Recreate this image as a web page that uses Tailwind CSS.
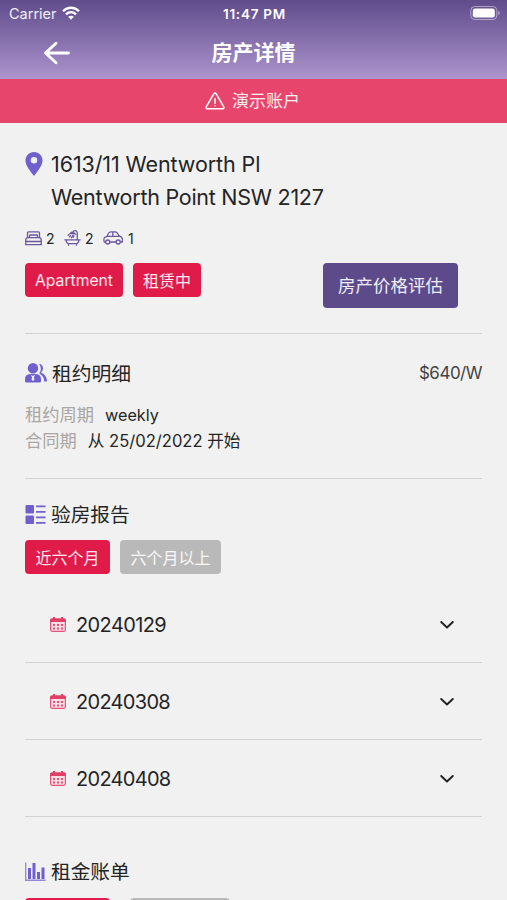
<!DOCTYPE html>
<html lang="zh-CN">
<head>
<meta charset="utf-8">
<meta name="viewport" content="width=device-width, initial-scale=1">
<title>房产详情</title>
<script src="https://cdn.jsdelivr.net/npm/@tailwindcss/browser@4"></script>
</head>
<body class="h-[900px] w-[507px] overflow-hidden bg-[#f1f1f1] font-['Inter','Noto_Sans_CJK_SC',sans-serif] text-[#242424]">
<header class="h-[79px] bg-linear-to-b from-[#614c8c] to-[#ad95cd] text-white">
  <div class="grid h-[27px] grid-cols-3 items-center pr-[7px] pl-[9px] text-[14px] whitespace-nowrap">
    <div class="flex items-center gap-[6px] text-white/90"><span class="text-[14.5px]">Carrier</span>
      <svg class="-mt-[1px] -ml-[1px] h-[14px] w-[18px]" viewBox="0 0 18 14" fill="none" stroke="#fff" stroke-width="2.3"><path d="M1 5.2C5.5.6 12.500.6 17 5.200M4 8.400C7 5.500 11 5.500 14 8.400"/><path d="M6.200 10.800Q9 8.500 11.800 10.800L9 13.800Z" fill="#fff" stroke="none"/></svg>
    </div>
    <div class="pt-[1px] text-center text-[13.500px] font-semibold tracking-[0.75px]">11:47 PM</div>
    <svg class="-mt-[1px] h-[14px] w-[30px] justify-self-end" viewBox="0 0 30 14"><rect x=".8" y=".5" width="26" height="13" rx="4" fill="none" stroke="#fff" stroke-opacity=".45"/><rect x="2.800" y="2.500" width="22" height="9" rx="2.300" fill="#fff"/><path d="M28.300 5v4q1.500-.7 1.500-2t-1.500-2" fill="#fff" fill-opacity=".5"/></svg>
  </div>
  <div class="grid h-[52px] grid-cols-3 items-center">
    <svg class="-mt-[1px] ml-[43px] h-[24px] w-[28px]" viewBox="0 0 28 24" fill="none" stroke="#fff" stroke-width="2.900" stroke-linecap="round" stroke-linejoin="round"><path d="M25.500 12H2.500M13 2.200 2.500 12 13 21.800"/></svg>
    <h1 class="text-center text-[21px] leading-[28px] font-bold">房产详情</h1>
  </div>
</header>
<div class="flex h-[44px] items-center justify-center gap-[7px] bg-[#e8456c] text-[17px] text-white/90">
  <svg class="-ml-[2px] h-[18px] w-[20px]" viewBox="0 0 20 18" fill="none" stroke="#fff" stroke-width="1.500" stroke-linejoin="round" stroke-linecap="round"><path d="M8.900 1.700 1.200 14.900Q.6 16.500 2.200 16.700h15.600q1.600-.2 1-1.800L11.100 1.700q-1.100-1.400-2.200 0ZM10 6.700v4.500M10 13.700v.1"/></svg>
  <span class="pt-[2px]">演示账户</span>
</div>
<main class="px-[25px]">
  <section class="h-[211px] border-b border-[#d2d2d2] pt-[25px]">
    <div class="flex">
      <svg class="mt-[4px] h-[24px] w-[18px]" viewBox="0 0 18 24"><path fill="#7060ce" fill-rule="evenodd" d="M9 0C4 0 .5 3.800.5 8.600.5 13 4 18 9 24c5-6 8.500-11 8.500-15.400C17.500 3.800 14 0 9 0Zm0 5a3.200 3.200 0 1 1 0 6.400A3.200 3.200 0 0 1 9 5Z"/></svg>
      <div class="pl-[8px] text-[21.500px] leading-[33px] whitespace-nowrap"><p class="tracking-[-0.1px]">1613/11 Wentworth Pl</p><p class="tracking-[-0.260px]">Wentworth Point NSW 2127</p></div>
    </div>
    <div class="mt-[14px] flex h-[20px] items-center text-[14px]">
      <svg class="h-[15px] w-[17px]" viewBox="0 0 17 15" fill="none" stroke="#6a589f" stroke-width="1.300" stroke-linejoin="round"><path d="M2.500 7V2Q2.500.8 3.700.8h9.600q1.200 0 1.200 1.200v5M4.500 6.500V4.800Q4.500 4 5.300 4h6.400q.8 0 .8.800v1.700M.7 13.700V9.200Q.7 7 2.900 6.700h11.200q2.200.3 2.200 2.500v4.500ZM.7 10.500h15.600"/></svg>
      <span class="ml-[4px] w-[9px]">2</span>
      <svg class="ml-[9px] h-[16px] w-[17px]" viewBox="0 0 17 16" fill="none" stroke="#6a589f" stroke-width="1.300" stroke-linecap="round"><path d="M.8 9.800h15.400M2.200 10q.2 3.700 3 3.700h6.600q2.800 0 3-3.700M4.500 14v1.300M12.500 14v1.300M13.300 9.600V3.200Q13.300.7 11 .7 9.100.7 8.800 2.500M6.300 3.500Q8.500.8 11.300 4ZM6.500 5.800l-1 1M9 5.500 7.300 7.800M5 4.500l-.8.800M10 6.300l-.8.800"/></svg>
      <span class="ml-[4px] w-[9px]">2</span>
      <svg class="ml-[9px] h-[14px] w-[20px]" viewBox="0 0 20 14" fill="none" stroke="#6a589f" stroke-width="1.300" stroke-linejoin="round"><path d="M2.800 11H1.200Q.6 7.500 1.500 6.500L4 5.300l1.500-3Q6.200.8 8 .8h3.800q1.500 0 2.400 1.200l2.200 3.200q3 .6 3 3.200V11h-2.200M6.800 11h6.400M4 5.300h12.400M9.800.8v4.500"/><circle cx="4.800" cy="11" r="2"/><circle cx="15.200" cy="11" r="2"/></svg>
      <span class="ml-[5px]">1</span>
    </div>
    <div class="mt-[15px] flex items-start gap-[10px] text-[16px] text-white/90">
      <span class="flex h-[34px] w-[98px] items-center justify-center rounded-[4px] bg-[#e11b49] pt-[1px] text-[15.700px]">Apartment</span>
      <span class="flex h-[34px] w-[68px] items-center justify-center rounded-[4px] bg-[#e11b49] pt-[1px]">租赁中</span>
      <button class="mr-[24px] ml-auto h-[45px] w-[135px] rounded-[4px] bg-[#5c4a8b] pt-[2px] text-[17.500px]">房产价格评估</button>
    </div>
  </section>
  <section class="h-[145px] border-b border-[#d2d2d2] pt-[24px]">
    <div class="flex h-[30px] items-center">
      <svg class="h-[20px] w-[22px]" viewBox="0 0 22 20" fill="#7060ce"><circle cx="8" cy="5.200" r="5.200"/><path fill-rule="evenodd" d="M5 11h6q5 .4 5 5.200V18q0 1.500-1.500 1.500h-13Q0 19.500 0 18v-1.800Q0 11.400 5 11Zm.6.800 1.500 2.500-.6 2.200L8 18l1.500-1.500-.6-2.200 1.500-2.500L8 13Z"/><path d="M14 .7q4 .8 4 4.700 0 2.600-2.200 4.200Q22 12 22 18.500h-2.800q.2-5-4.200-7.600-1.300-.8 0-2Q17.300 5.700 14 .7Z"/></svg>
      <h2 class="mt-[1px] ml-[5px] text-[19.800px] leading-[30px]">租约明细</h2><span class="mt-[2px] ml-auto text-[17px] tracking-[-0.500px] text-[#444]">$640/W</span>
    </div>
    <div class="mt-[14px] text-[17.250px] leading-[26px]">
      <p class="flex gap-[11px]"><span class="text-[#aaa6a3]">租约周期</span><span class="text-[16.200px]">weekly</span></p>
      <p class="flex gap-[11px]"><span class="text-[#aaa6a3]">合同期</span><span class="text-[16.600px]">从 25/02/2022 开始</span></p>
    </div>
  </section>
  <section>
    <div class="flex h-[61px] items-center pt-[9px]">
      <svg class="h-[19px] w-[21px]" viewBox="0 0 21 19" fill="#7060ce"><rect x=".5" width="8.500" height="8.500" rx="1"/><rect x=".5" y="10.500" width="8.500" height="8.500" rx="1"/><path d="M11 .5h9.500v1.700H11zM11 6h9.500v1.700H11zM11 11.500h9.500v1.700H11zM11 17h9.500v1.700H11z"/></svg>
      <h2 class="mt-[1px] ml-[5px] text-[19.700px] leading-[30px]">验房报告</h2>
    </div>
    <div class="flex gap-[10px] text-[16px] text-white/90">
      <button class="h-[34px] w-[85px] rounded-[4px] bg-[#e11b49] pt-[2px]">近六个月</button>
      <button class="h-[34px] w-[101px] rounded-[4px] bg-[#b9b9b9] pt-[2px]">六个月以上</button>
    </div>
    <div class="mt-[12px]">
      <div class="flex h-[77px] items-center border-b border-[#d2d2d2] pr-[28px] pl-[25px]">
        <svg class="h-[15px] w-[16px]" viewBox="0 0 16 15"><rect x=".6" y="2" width="14.800" height="12.300" rx="1.500" fill="#f7dfe5" stroke="#e8517a" stroke-width="1.200"/><path d="M0 5V3q0-1.500 1.500-1.500H3V0h2v1.500h6V0h2v1.500h1.500Q16 1.500 16 3v2Z" fill="#e23f69"/><path d="M3 7h2v2H3zM7 7h2v2H7zM11 7h2v2h-2zM3 10.500h2v2H3zM7 10.500h2v2H7zM11 10.500h2v2h-2z" fill="#e8517a"/></svg>
        <span class="mt-[2px] ml-[10px] text-[20px] tracking-[-0.600px]">20240129</span>
        <svg class="mt-[1px] ml-auto h-[10px] w-[14px]" viewBox="0 0 14 10" fill="none" stroke="#222" stroke-width="1.900" stroke-linecap="round" stroke-linejoin="round"><path d="m1.200 2 5.800 5.500L12.800 2"/></svg>
      </div>
      <div class="flex h-[77px] items-center border-b border-[#d2d2d2] pr-[28px] pl-[25px]">
        <svg class="h-[15px] w-[16px]" viewBox="0 0 16 15"><rect x=".6" y="2" width="14.800" height="12.300" rx="1.500" fill="#f7dfe5" stroke="#e8517a" stroke-width="1.200"/><path d="M0 5V3q0-1.500 1.500-1.500H3V0h2v1.500h6V0h2v1.500h1.500Q16 1.500 16 3v2Z" fill="#e23f69"/><path d="M3 7h2v2H3zM7 7h2v2H7zM11 7h2v2h-2zM3 10.500h2v2H3zM7 10.500h2v2H7zM11 10.500h2v2h-2z" fill="#e8517a"/></svg>
        <span class="mt-[2px] ml-[10px] text-[20px] tracking-[-0.700px]">20240308</span>
        <svg class="mt-[1px] ml-auto h-[10px] w-[14px]" viewBox="0 0 14 10" fill="none" stroke="#222" stroke-width="1.900" stroke-linecap="round" stroke-linejoin="round"><path d="m1.200 2 5.800 5.500L12.800 2"/></svg>
      </div>
      <div class="flex h-[77px] items-center border-b border-[#d2d2d2] pr-[28px] pl-[25px]">
        <svg class="h-[15px] w-[16px]" viewBox="0 0 16 15"><rect x=".6" y="2" width="14.800" height="12.300" rx="1.500" fill="#f7dfe5" stroke="#e8517a" stroke-width="1.200"/><path d="M0 5V3q0-1.500 1.500-1.500H3V0h2v1.500h6V0h2v1.500h1.500Q16 1.500 16 3v2Z" fill="#e23f69"/><path d="M3 7h2v2H3zM7 7h2v2H7zM11 7h2v2h-2zM3 10.500h2v2H3zM7 10.500h2v2H7zM11 10.500h2v2h-2z" fill="#e8517a"/></svg>
        <span class="mt-[2px] ml-[10px] text-[20px] tracking-[-0.700px]">20240408</span>
        <svg class="mt-[1px] ml-auto h-[10px] w-[14px]" viewBox="0 0 14 10" fill="none" stroke="#222" stroke-width="1.900" stroke-linecap="round" stroke-linejoin="round"><path d="m1.200 2 5.800 5.500L12.800 2"/></svg>
      </div>
    </div>
  </section>
  <section>
    <div class="flex h-[81px] items-center pt-[28px]">
      <svg class="h-[19px] w-[21px]" viewBox="0 0 21 19" fill="#7060ce"><path d="M.6.5v17.700h20" fill="none" stroke="#9388d8" stroke-width="1.500"/><path d="M3 6h3v11H3zM7.500 1h3v16h-3zM12 10h3v7h-3zM16.500 5.500h3V17h-3z"/></svg>
      <h2 class="ml-[5px] text-[19.700px] leading-[30px]">租金账单</h2>
    </div>
    <div class="flex gap-[20px]"><button class="h-[34px] w-[85px] rounded-[4px] bg-[#e11b49]"></button><button class="h-[34px] w-[100px] rounded-[4px] bg-[#b9b9b9]"></button></div>
  </section>
</main>
</body>
</html>
